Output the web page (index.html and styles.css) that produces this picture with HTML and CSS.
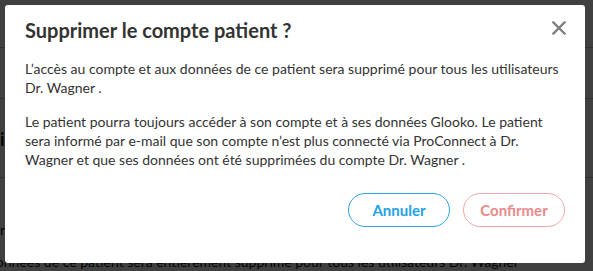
FILE: index.html
```html
<!DOCTYPE html>
<html lang="fr">
<head>
<meta charset="utf-8">
<link rel="stylesheet" href="styles.css">
</head>
<body>
<div class="page">
  <div class="page-row row-a"></div>
  <div class="page-row row-b"></div>
  <div class="page-row row-c">i</div>
  <div class="page-row row-d">r</div>
  <div class="page-foot">données de ce patient sera entièrement supprimé pour tous les utilisateurs Dr. Wagner</div>
</div>
<div class="overlay"></div>
<div class="modal" role="dialog">
  <div class="modal-head">
    <h1 class="modal-title">Supprimer le compte patient ?</h1>
    <button class="close" aria-label="Fermer">
      <svg width="14" height="14" viewBox="0 0 14 14"><path d="M1.5 1.5 L12.5 12.5 M12.5 1.5 L1.5 12.5" stroke="#7f7f7f" stroke-width="2.4" stroke-linecap="square" fill="none"/></svg>
    </button>
  </div>
  <p class="para">L’accès au compte et aux données de ce patient sera supprimé pour tous les utilisateurs Dr. Wagner .</p>
  <p class="para para-2">Le patient pourra toujours accéder à son compte et à ses données Glooko. Le patient sera informé par e-mail que son compte n’est plus connecté via ProConnect à Dr. Wagner et que ses données ont été supprimées du compte Dr. Wagner .</p>
  <div class="actions">
    <button class="btn btn-cancel">Annuler</button>
    <button class="btn btn-confirm">Confirmer</button>
  </div>
</div>
</body>
</html>
```

FILE: styles.css
```css
html, body {
  margin: 0;
  padding: 0;
  width: 593px;
  height: 271px;
  overflow: hidden;
}
body {
  background: #ffffff;
  font-family: Lato, "Open Sans", sans-serif;
  position: relative;
}
.page {
  display: flex;
  flex-direction: column;
  height: 271px;
  color: #111;
  font-size: 14px;
}
.page-row {
  border-bottom: 1px solid #bbb;
  font-size: 18px;
  font-weight: 700;
  line-height: 20px;
}
.row-a { height: 48px; }
.row-b { height: 51px; }
.row-c { height: 80px; padding-top: 30px; box-sizing: border-box; }
.row-d { height: 80px; padding-top: 42px; box-sizing: border-box; border-bottom: none; font-weight: 400; font-size: 14px; }
.page-foot {
  margin-left: -12px;
  white-space: nowrap;
  line-height: 18px;
  margin-top: -4px;
}
.overlay {
  position: absolute;
  inset: 0;
  background: rgba(0, 0, 0, 0.75);
}
.modal {
  position: absolute;
  left: 5px;
  top: 5px;
  width: 580px;
  height: 258px;
  box-sizing: border-box;
  background: #fff;
  border-radius: 3px;
  padding: 13px 20px 0 20px;
  display: flex;
  flex-direction: column;
  color: #333;
}
.modal-head {
  display: flex;
  align-items: flex-start;
  justify-content: space-between;
}
.modal-title {
  margin: 0;
  font-size: 20px;
  line-height: 24px;
  font-weight: 700;
  color: #333;
}
.close {
  border: none;
  background: none;
  padding: 0;
  margin: 3px -1px 0 0;
  width: 14px;
  height: 14px;
  display: flex;
}
.para {
  margin: 17px 0 0 0;
  font-size: 14px;
  line-height: 19px;
  color: #333;
}
.para-2 {
  margin-top: 15px;
}
.actions {
  display: flex;
  justify-content: flex-end;
  gap: 13px;
  margin-top: 24px;
}
.btn {
  width: 102px;
  height: 34px;
  border-radius: 17px;
  background: #fff;
  font-family: Lato, "Open Sans", sans-serif;
  font-size: 15px;
  font-weight: 700;
  padding: 0;
}
.btn-cancel {
  border: 1px solid #2aa6ea;
  color: #22a2e8;
}
.btn-confirm {
  border: 1px solid #f0a8a8;
  color: #e98a8a;
}
```
